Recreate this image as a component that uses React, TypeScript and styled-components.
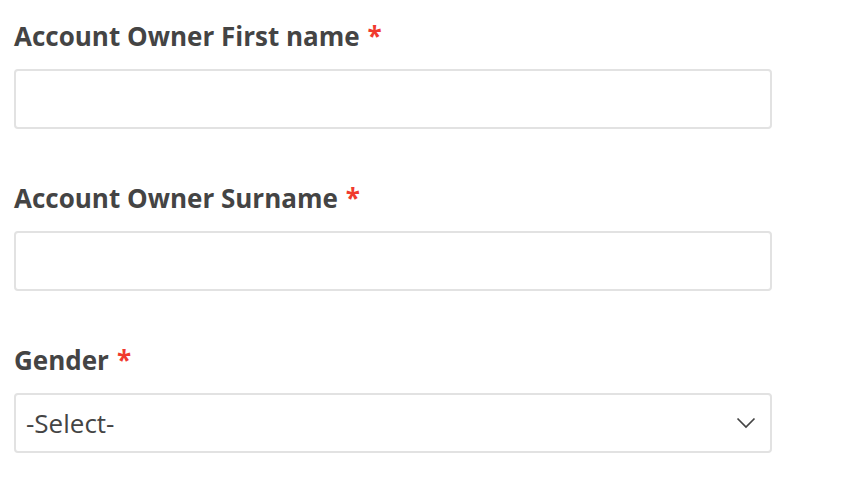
import styled, { createGlobalStyle } from 'styled-components';

const GlobalStyle = createGlobalStyle`
  html, body {
    margin: 0;
    padding: 0;
    background: #ffffff;
  }
  body {
    font-family: "Open Sans", "Noto Sans", sans-serif;
    color: #444444;
  }
`;

const Form = styled.form`
  width: 758px;
  padding: 18px 0 0 14px;
  display: flex;
  flex-direction: column;
  gap: 51px;
`;

const Field = styled.div`
  display: flex;
  flex-direction: column;
  gap: 15px;
`;

const Label = styled.label`
  font-size: 26px;
  line-height: 36px;
  font-weight: 700;
  color: #444444;
`;

const Required = styled.span`
  color: #f03a2e;
  margin-left: 8px;
`;

const TextInput = styled.input`
  box-sizing: border-box;
  width: 100%;
  height: 60px;
  border: 2px solid #e2e2e2;
  border-radius: 4px;
  padding: 0 12px;
  font-family: inherit;
  font-size: 26px;
  color: #444444;
  background: #ffffff;
  outline: none;
`;

const SelectWrap = styled.div`
  position: relative;
  width: 100%;
`;

const Select = styled.select`
  box-sizing: border-box;
  width: 100%;
  height: 60px;
  border: 2px solid #e2e2e2;
  border-radius: 4px;
  padding: 0 10px;
  font-family: inherit;
  font-size: 26px;
  color: #444444;
  background: #ffffff;
  appearance: none;
  outline: none;
`;

const Chevron = styled.svg`
  position: absolute;
  right: 16px;
  top: 50%;
  transform: translateY(-50%);
  pointer-events: none;
`;

export default function App() {
  return (
    <>
      <GlobalStyle />
      <Form>
        <Field>
          <Label htmlFor="first">
            Account Owner First name<Required>*</Required>
          </Label>
          <TextInput id="first" type="text" />
        </Field>
        <Field>
          <Label htmlFor="surname">
            Account Owner Surname<Required>*</Required>
          </Label>
          <TextInput id="surname" type="text" />
        </Field>
        <Field>
          <Label htmlFor="gender">
            Gender<Required>*</Required>
          </Label>
          <SelectWrap>
            <Select id="gender" defaultValue="">
              <option value="">-Select-</option>
              <option value="male">Male</option>
              <option value="female">Female</option>
            </Select>
            <Chevron width="20" height="12" viewBox="0 0 20 12" fill="none">
              <path d="M1.5 1.5 L10 10 L18.5 1.5" stroke="#444444" strokeWidth="1.7" />
            </Chevron>
          </SelectWrap>
        </Field>
      </Form>
    </>
  );
}
